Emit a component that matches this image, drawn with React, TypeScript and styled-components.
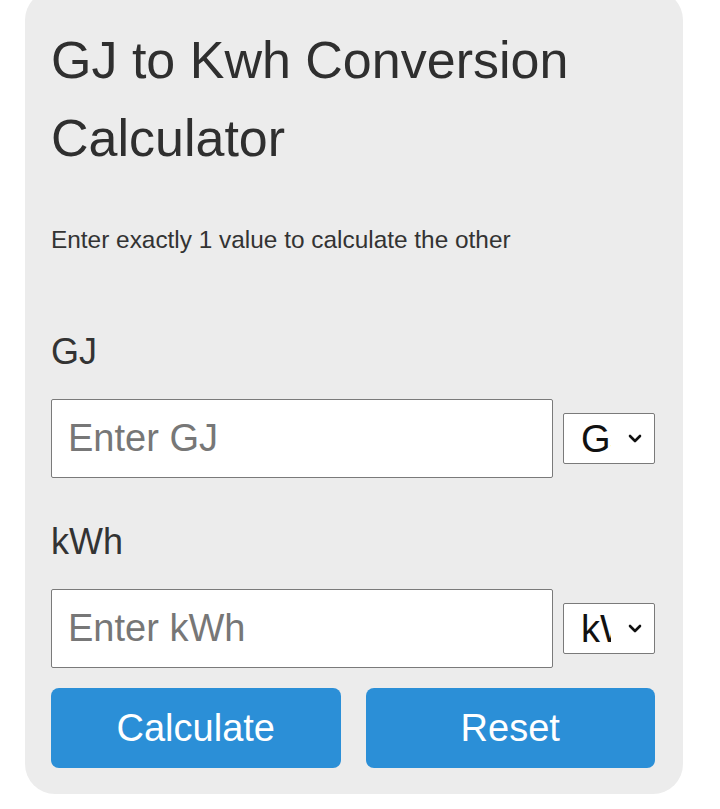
import React from 'react';
import styled, { createGlobalStyle } from 'styled-components';

const GlobalStyle = createGlobalStyle`
  body {
    margin: 0;
    background: #ffffff;
    font-family: "Liberation Sans", Arial, sans-serif;
  }
`;

const fields = [
  { label: 'GJ', placeholder: 'Enter GJ', unit: 'GJ' },
  { label: 'kWh', placeholder: 'Enter kWh', unit: 'kWh' },
];

const Chevron: React.FC = () => (
  <ChevronIcon viewBox="0 0 14 9" width="14" height="9">
    <polyline points="2,2 7,7 12,2" fill="none" stroke="#111111" strokeWidth="2.6" strokeLinecap="round" strokeLinejoin="round" />
  </ChevronIcon>
);

const App: React.FC = () => {
  return (
    <>
      <GlobalStyle />
      <Page>
        <Card>
          <Title>GJ to Kwh Conversion Calculator</Title>
          <Hint>Enter exactly 1 value to calculate the other</Hint>
          {fields.map((f, i) => (
            <Field key={f.label} $last={i === fields.length - 1}>
              <Label>{f.label}</Label>
              <InputRow>
                <ValueInput type="text" placeholder={f.placeholder} />
                <SelectWrap>
                  <UnitSelect defaultValue={f.unit}>
                    <option value={f.unit}>{f.unit}</option>
                  </UnitSelect>
                  <Chevron />
                </SelectWrap>
              </InputRow>
            </Field>
          ))}
          <ButtonRow>
            <ActionButton>Calculate</ActionButton>
            <ActionButton>Reset</ActionButton>
          </ButtonRow>
        </Card>
      </Page>
    </>
  );
};

export default App;

const Page = styled.div`
  padding: 0 37px 0 25px;
`;

const Card = styled.div`
  box-sizing: border-box;
  margin-top: -10px;
  width: 658px;
  padding: 31px 28px 26px 26px;
  background-color: #ececec;
  border-radius: 30px;
  color: #333333;
`;

const Title = styled.h1`
  margin: 0;
  font-size: 52px;
  line-height: 78px;
  font-weight: normal;
  color: #2f2f2f;
`;

const Hint = styled.p`
  margin: 45px 0 0;
  font-size: 24.4px;
  line-height: 36px;
  color: #333333;
`;

const Field = styled.div<{ $last: boolean }>`
  margin-top: ${(p) => (p.$last ? '37px' : '67px')};
`;

const Label = styled.div`
  font-size: 36px;
  line-height: 54px;
  margin-bottom: 20px;
  color: #333333;
`;

const InputRow = styled.div`
  display: flex;
  align-items: center;
  gap: 10px;
`;

const ValueInput = styled.input`
  box-sizing: border-box;
  width: 502px;
  height: 79px;
  padding: 0 16px;
  border: 1px solid #7a7a7a;
  border-radius: 2px;
  background: #ffffff;
  font-family: "Liberation Sans", Arial, sans-serif;
  font-size: 38px;
  color: #333333;
  outline: none;

  &::placeholder {
    color: #777777;
  }
`;

const SelectWrap = styled.div`
  position: relative;
  display: flex;
`;

const UnitSelect = styled.select`
  box-sizing: border-box;
  appearance: none;
  width: 92px;
  height: 51px;
  padding: 0 43px 0 17px;
  border: 1px solid #7a7a7a;
  border-radius: 2px;
  background: #ffffff;
  font-family: "Liberation Sans", Arial, sans-serif;
  font-size: 38px;
  color: #111111;
  outline: none;
`;

const ChevronIcon = styled.svg`
  position: absolute;
  right: 13px;
  top: 21px;
  pointer-events: none;
`;

const ButtonRow = styled.div`
  display: grid;
  grid-template-columns: 1fr 1fr;
  gap: 25px;
  margin-top: 20px;
`;

const ActionButton = styled.button`
  height: 80px;
  border: none;
  border-radius: 8px;
  background-color: #2b8fd7;
  color: #ffffff;
  font-family: "Liberation Sans", Arial, sans-serif;
  font-size: 38px;
  cursor: pointer;
`;
